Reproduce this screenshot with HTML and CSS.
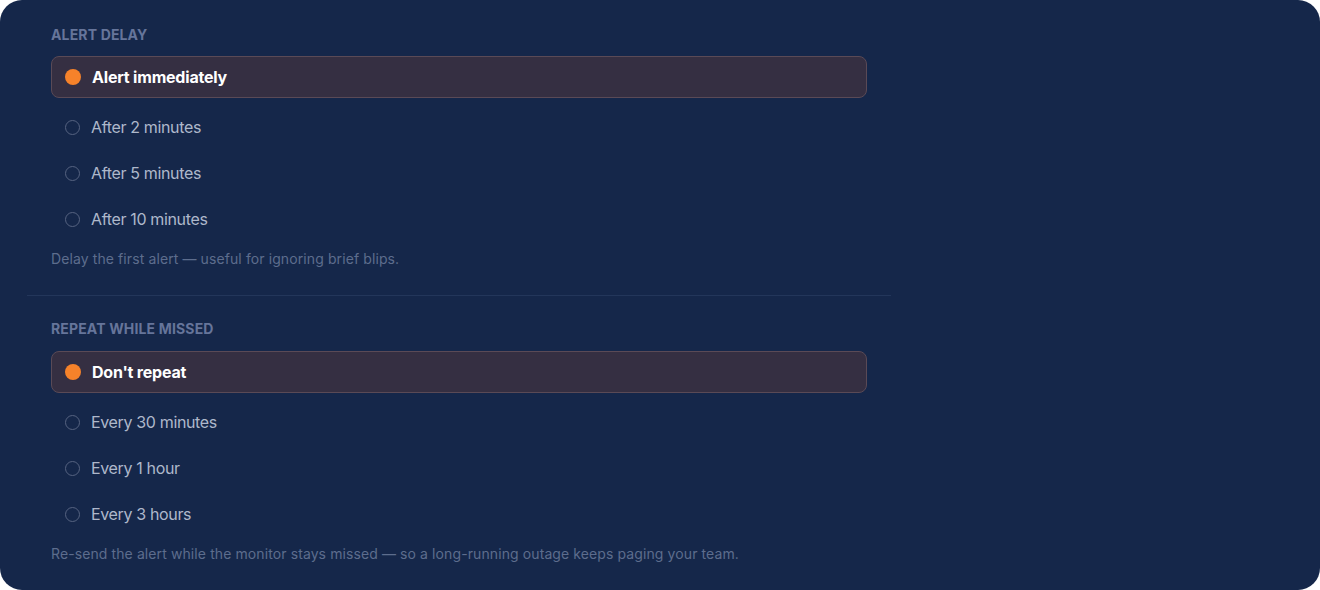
FILE: index.html
```html
<!DOCTYPE html>
<html>
<head>
<meta charset="utf-8">
<link rel="stylesheet" href="styles.css">
</head>
<body>
<div class="card">
  <div class="panel">
    <section class="group">
      <div class="label">Alert delay</div>
      <div class="options">
        <div class="option selected"><span class="radio"></span><span class="text">Alert immediately</span></div>
        <div class="option"><span class="radio"></span><span class="text">After 2 minutes</span></div>
        <div class="option"><span class="radio"></span><span class="text">After 5 minutes</span></div>
        <div class="option"><span class="radio"></span><span class="text">After 10 minutes</span></div>
      </div>
      <p class="hint">Delay the first alert — useful for ignoring brief blips.</p>
    </section>
    <section class="group second">
      <div class="label">Repeat while missed</div>
      <div class="options">
        <div class="option selected"><span class="radio"></span><span class="text">Don't repeat</span></div>
        <div class="option"><span class="radio"></span><span class="text">Every 30 minutes</span></div>
        <div class="option"><span class="radio"></span><span class="text">Every 1 hour</span></div>
        <div class="option"><span class="radio"></span><span class="text">Every 3 hours</span></div>
      </div>
      <p class="hint">Re-send the alert while the monitor stays missed — so a long-running outage keeps paging your team.</p>
    </section>
  </div>
</div>
</body>
</html>
```
FILE: styles.css
```css
* { box-sizing: border-box; }
html, body { margin: 0; padding: 0; background: #ffffff; }
body { font-family: Inter, "Noto Sans", sans-serif; }
.card {
  width: 1320px;
  height: 590px;
  background: #15274a;
  border-radius: 22px;
  overflow: hidden;
  padding: 0 0 0 27px;
}
.panel { width: 864px; }
.group { padding: 25px 24px 26px; }
.group.second { border-top: 1px solid #23365a; padding-top: 23px; }
.label {
  font-size: 14px;
  line-height: 20px;
  font-weight: 700;
  text-transform: uppercase;
  color: #66759a;
  letter-spacing: 0.15px;
  margin-bottom: 11px;
}
.group.second .label { margin-bottom: 12px; }
.options { display: flex; flex-direction: column; gap: 8px; }
.option {
  display: flex;
  align-items: center;
  height: 38px;
  padding: 0 13px;
  border: 1px solid transparent;
  border-radius: 8px;
  font-size: 16px;
  color: #aeb8cb;
  letter-spacing: -0.35px;
}
.option.selected {
  height: 42px;
  margin-bottom: 2px;
  background: #352f42;
  border-color: #5a4a56;
  color: #ffffff;
  font-weight: 700;
  letter-spacing: -0.2px;
}
.radio {
  width: 15px;
  height: 15px;
  border-radius: 50%;
  border: 1.75px solid #566381;
  margin: 0 11px 0 0;
  flex: none;
}
.option.selected .radio {
  width: 16px;
  height: 16px;
  border: none;
  background: #f6822a;
}
.hint {
  margin: 11px 0 0;
  font-size: 14px;
  line-height: 20px;
  color: #5d6d8d;
  letter-spacing: 0.1px;
}
```
